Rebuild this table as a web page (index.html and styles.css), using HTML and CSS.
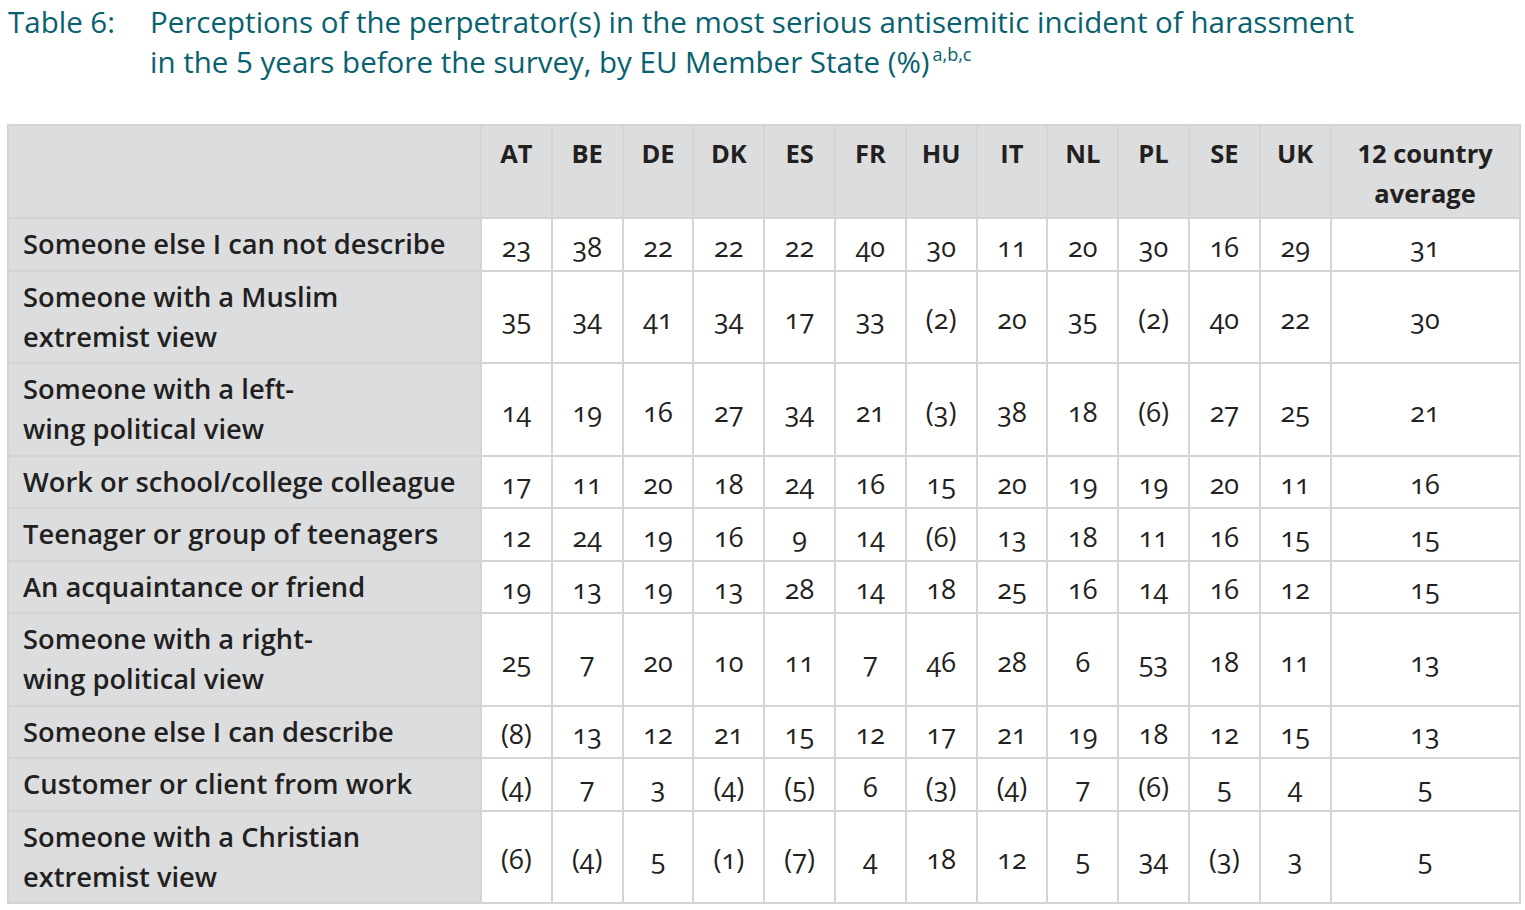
FILE: index.html
```html
<!DOCTYPE html>
<html lang="en">
<head>
<meta charset="utf-8">
<title>Table 6</title>
<link rel="stylesheet" href="styles.css">
</head>
<body>
<div class="caption">
  <div class="caption-label">Table 6:</div>
  <div class="caption-text">Perceptions of the perpetrator(s) in the most serious antisemitic incident of harassment<br>in the 5 years before the survey, by EU Member State (%)<sup>a,b,c</sup></div>
</div>
<table class="data">
  <colgroup>
    <col class="c-label">
    <col class="c-num"><col class="c-num"><col class="c-num"><col class="c-num"><col class="c-num"><col class="c-num">
    <col class="c-num"><col class="c-num"><col class="c-num"><col class="c-num"><col class="c-num"><col class="c-num">
    <col class="c-avg">
  </colgroup>
  <thead>
    <tr>
      <th class="corner"></th>
      <th>AT</th><th>BE</th><th>DE</th><th>DK</th><th>ES</th><th>FR</th><th>HU</th><th>IT</th><th>NL</th><th>PL</th><th>SE</th><th>UK</th>
      <th class="avg">12 country<br>average</th>
    </tr>
  </thead>
  <tbody>
    <tr class="single"><th>Someone else I can not describe</th><td>23</td><td>38</td><td>22</td><td>22</td><td>22</td><td>40</td><td>30</td><td>11</td><td>20</td><td>30</td><td>16</td><td>29</td><td>31</td></tr>
    <tr class="double"><th>Someone with a Muslim<br>extremist view</th><td>35</td><td>34</td><td>41</td><td>34</td><td>17</td><td>33</td><td>(2)</td><td>20</td><td>35</td><td>(2)</td><td>40</td><td>22</td><td>30</td></tr>
    <tr class="double"><th>Someone with a left-<br>wing political view</th><td>14</td><td>19</td><td>16</td><td>27</td><td>34</td><td>21</td><td>(3)</td><td>38</td><td>18</td><td>(6)</td><td>27</td><td>25</td><td>21</td></tr>
    <tr class="single"><th>Work or school/college colleague</th><td>17</td><td>11</td><td>20</td><td>18</td><td>24</td><td>16</td><td>15</td><td>20</td><td>19</td><td>19</td><td>20</td><td>11</td><td>16</td></tr>
    <tr class="single"><th>Teenager or group of teenagers</th><td>12</td><td>24</td><td>19</td><td>16</td><td>9</td><td>14</td><td>(6)</td><td>13</td><td>18</td><td>11</td><td>16</td><td>15</td><td>15</td></tr>
    <tr class="single"><th>An acquaintance or friend</th><td>19</td><td>13</td><td>19</td><td>13</td><td>28</td><td>14</td><td>18</td><td>25</td><td>16</td><td>14</td><td>16</td><td>12</td><td>15</td></tr>
    <tr class="double"><th>Someone with a right-<br>wing political view</th><td>25</td><td>7</td><td>20</td><td>10</td><td>11</td><td>7</td><td>46</td><td>28</td><td>6</td><td>53</td><td>18</td><td>11</td><td>13</td></tr>
    <tr class="single"><th>Someone else I can describe</th><td>(8)</td><td>13</td><td>12</td><td>21</td><td>15</td><td>12</td><td>17</td><td>21</td><td>19</td><td>18</td><td>12</td><td>15</td><td>13</td></tr>
    <tr class="single"><th>Customer or client from work</th><td>(4)</td><td>7</td><td>3</td><td>(4)</td><td>(5)</td><td>6</td><td>(3)</td><td>(4)</td><td>7</td><td>(6)</td><td>5</td><td>4</td><td>5</td></tr>
    <tr class="double"><th>Someone with a Christian<br>extremist view</th><td>(6)</td><td>(4)</td><td>5</td><td>(1)</td><td>(7)</td><td>4</td><td>18</td><td>12</td><td>5</td><td>34</td><td>(3)</td><td>3</td><td>5</td></tr>
  </tbody>
</table>
</body>
</html>
```

FILE: styles.css
```css
html, body {
  margin: 0;
  padding: 0;
  background: #ffffff;
}

body {
  font-family: "Open Sans", "Noto Sans", sans-serif;
}

.caption {
  display: flex;
  color: #08616f;
  font-size: 29.5px;
  line-height: 40px;
  padding-top: 2px;
}

.caption-label {
  width: 142px;
  padding-left: 8px;
  flex: none;
}

.caption-text sup {
  font-size: 18px;
  line-height: 0;
  vertical-align: 12px;
  margin-left: 3px;
}

.data {
  margin: 42px 0 0 7px;
  width: 1512px;
  table-layout: fixed;
  border-collapse: collapse;
  border: 2px solid #d3d4d6;
  color: #231f20;
}

.c-label { width: 473px; }
.c-num { width: 70.8px; }
.c-avg { width: 189px; }

.data th,
.data td {
  border: 2px solid #d3d4d6;
  padding: 0;
}

.data thead th {
  background: #dcdddf;
  font-weight: 700;
  font-size: 25.5px;
  line-height: 40px;
  vertical-align: top;
  text-align: center;
  height: 93px;
  padding-top: 7px;
  box-sizing: border-box;
}

.data tbody th {
  background: #dcdddf;
  font-weight: 600;
  font-size: 27.3px;
  line-height: 40px;
  text-align: left;
  padding-left: 14px;
  vertical-align: middle;
}

.data td {
  background: #ffffff;
  font-size: 27px;
  text-align: center;
  vertical-align: middle;
  font-variant-numeric: oldstyle-nums;
  padding-top: 4px;
}

.single { height: 52.5px; }
.double { height: 92.5px; }
```
